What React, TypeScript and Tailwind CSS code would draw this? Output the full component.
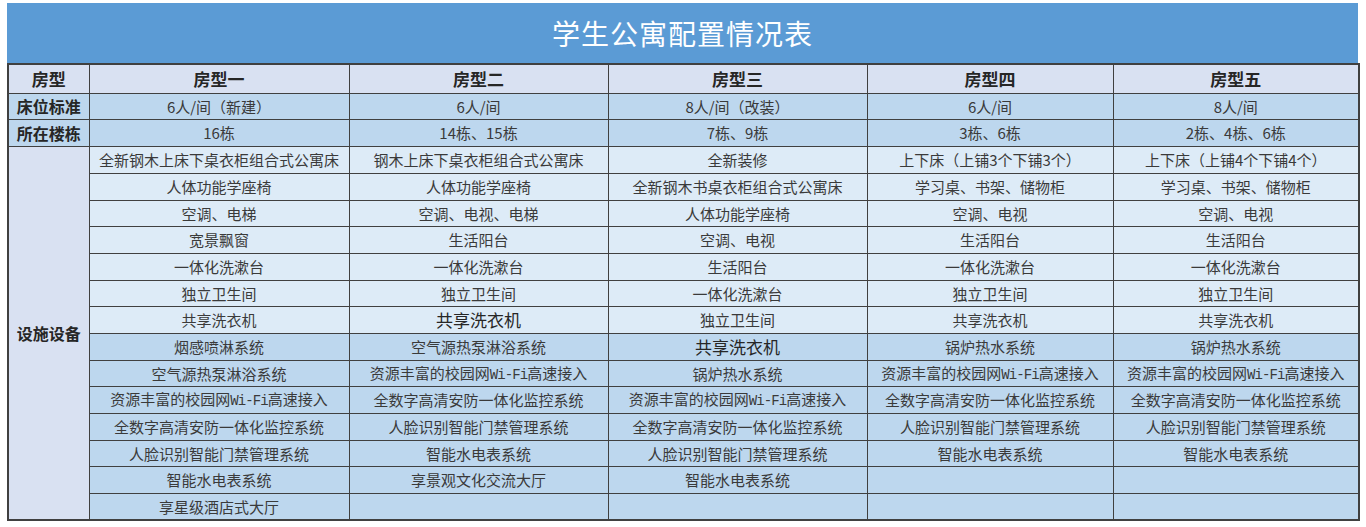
import React from 'react';

const facilities: string[][] = [
  [
    '全新钢木上床下桌衣柜组合式公寓床',
    '人体功能学座椅',
    '空调、电梯',
    '宽景飘窗',
    '一体化洗漱台',
    '独立卫生间',
    '共享洗衣机',
    '烟感喷淋系统',
    '空气源热泵淋浴系统',
    '资源丰富的校园网Wi-Fi高速接入',
    '全数字高清安防一体化监控系统',
    '人脸识别智能门禁管理系统',
    '智能水电表系统',
    '享星级酒店式大厅',
  ],
  [
    '钢木上床下桌衣柜组合式公寓床',
    '人体功能学座椅',
    '空调、电视、电梯',
    '生活阳台',
    '一体化洗漱台',
    '独立卫生间',
    '*共享洗衣机',
    '空气源热泵淋浴系统',
    '资源丰富的校园网Wi-Fi高速接入',
    '全数字高清安防一体化监控系统',
    '人脸识别智能门禁管理系统',
    '智能水电表系统',
    '享景观文化交流大厅',
    '',
  ],
  [
    '全新装修',
    '全新钢木书桌衣柜组合式公寓床',
    '人体功能学座椅',
    '空调、电视',
    '生活阳台',
    '一体化洗漱台',
    '独立卫生间',
    '*共享洗衣机',
    '锅炉热水系统',
    '资源丰富的校园网Wi-Fi高速接入',
    '全数字高清安防一体化监控系统',
    '人脸识别智能门禁管理系统',
    '智能水电表系统',
    '',
  ],
  [
    '上下床（上铺3个下铺3个）',
    '学习桌、书架、储物柜',
    '空调、电视',
    '生活阳台',
    '一体化洗漱台',
    '独立卫生间',
    '共享洗衣机',
    '锅炉热水系统',
    '资源丰富的校园网Wi-Fi高速接入',
    '全数字高清安防一体化监控系统',
    '人脸识别智能门禁管理系统',
    '智能水电表系统',
    '',
    '',
  ],
  [
    '上下床（上铺4个下铺4个）',
    '学习桌、书架、储物柜',
    '空调、电视',
    '生活阳台',
    '一体化洗漱台',
    '独立卫生间',
    '共享洗衣机',
    '锅炉热水系统',
    '资源丰富的校园网Wi-Fi高速接入',
    '全数字高清安防一体化监控系统',
    '人脸识别智能门禁管理系统',
    '智能水电表系统',
    '',
    '',
  ],
];

const roomTypes = ['房型一', '房型二', '房型三', '房型四', '房型五'];
const beds = ['6人/间（新建）', '6人/间', '8人/间（改装）', '6人/间', '8人/间'];
const buildings = ['16栋', '14栋、15栋', '7栋、9栋', '3栋、6栋', '2栋、4栋、6栋'];

// "*" marks the cells typed in a larger size in the sheet
function CellText({ text }: { text: string }) {
  if (text.startsWith('*')) {
    return <span className="text-[17px] text-[#262626]">{text.slice(1)}</span>;
  }
  const i = text.indexOf('Wi-Fi');
  if (i >= 0) {
    return (
      <>
        {text.slice(0, i)}
        <span className="font-['Liberation_Mono',monospace] text-[14px] tracking-[-0.9px]">Wi-Fi</span>
        {text.slice(i + 5)}
      </>
    );
  }
  return <>{text}</>;
}

const cell = 'border border-[#404040] text-center align-middle p-0 whitespace-nowrap';

export default function App() {
  return (
    <div className="min-h-screen bg-white pt-[3px] px-[7px] font-['Noto_Sans_CJK_SC',sans-serif] text-[#3a3a3a]">
      <div className="w-[1351px] h-[60px] bg-[#5b9bd5] flex items-center justify-center">
        <span className="text-white text-[28px] tracking-[1px]">学生公寓配置情况表</span>
      </div>
      <table className="w-[1351px] table-fixed border-collapse border-2 border-[#404040] text-[15px] leading-none">
        <colgroup>
          <col className="w-[81px]" />
          <col className="w-[260px]" />
          <col className="w-[259px]" />
          <col className="w-[259px]" />
          <col className="w-[246px]" />
          <col className="w-[246px]" />
        </colgroup>
        <tbody>
          <tr className="h-[29px] bg-[#d9e1f2] text-[17px] font-bold text-[#262626]">
            <td className={cell}>房型</td>
            {roomTypes.map((t) => (
              <td key={t} className={cell}>{t}</td>
            ))}
          </tr>
          <tr className="h-[26px] bg-[#bdd7ee]">
            <td className={`${cell} font-bold text-[16px] text-[#262626]`}>床位标准</td>
            {beds.map((t, i) => (
              <td key={i} className={cell}>{t}</td>
            ))}
          </tr>
          <tr className="h-[27px] bg-[#bdd7ee]">
            <td className={`${cell} font-bold text-[16px] text-[#262626]`}>所在楼栋</td>
            {buildings.map((t, i) => (
              <td key={i} className={cell}>{t}</td>
            ))}
          </tr>
          {facilities[0].map((_, r) => (
            <tr key={r} className={`${r % 3 === 2 ? 'h-[26px]' : 'h-[27px]'} ${r < 7 ? 'bg-[#ddebf7]' : 'bg-[#bdd7ee]'}`}>
              {r === 0 && (
                <td rowSpan={14} className={`${cell} bg-[#d9e1f2] font-bold text-[16px] text-[#262626]`}>
                  设施设备
                </td>
              )}
              {facilities.map((col, c) => (
                <td key={c} className={cell}>
                  <CellText text={col[r]} />
                </td>
              ))}
            </tr>
          ))}
        </tbody>
      </table>
    </div>
  );
}
